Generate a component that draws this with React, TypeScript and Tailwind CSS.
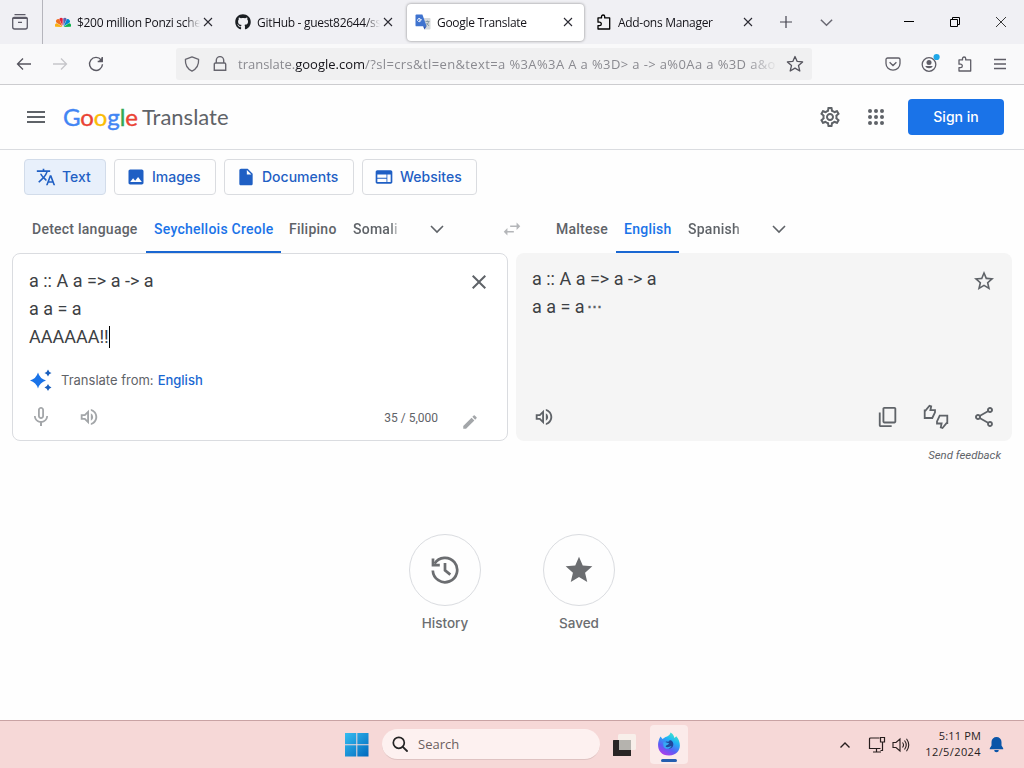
import type { ReactNode } from "react";
import {
  MdTranslate,
  MdImage,
  MdInsertDriveFile,
  MdWeb,
  MdOutlineSettings,
  MdMenu,
  MdClose,
  MdMicNone,
  MdOutlineVolumeUp,
  MdEdit,
  MdStarOutline,
  MdContentCopy,
  MdOutlineShare,
  MdStar,
} from "react-icons/md";
import { FaGithub } from "react-icons/fa";

function CloseIcon() {
  return (
    <svg className="block size-[16px] shrink-0" fill="none" viewBox="0 0 16 16">
      <path d="M4 4L12 12M12 4L4 12" stroke="#2b2a33" strokeWidth="1.1" />
    </svg>
  );
}

function Chevron({ className }: { className: string }) {
  return (
    <svg className={className} fill="none" viewBox="0 0 16 16">
      <path d="M2 5L8 11L14 5" stroke="currentColor" strokeWidth="1.6" />
    </svg>
  );
}

function PuzzleIcon() {
  return (
    <svg className="block size-[16px] shrink-0" fill="none" viewBox="0 0 16 16">
      <path
        d="M2 6.5V3.9H5.5V2.6A1.6 1.6 0 0 1 8.7 2.6V3.9H13.7V15H2V11.6H3.6A1.7 1.7 0 0 0 3.6 8.2H2V6.5"
        stroke="currentColor"
        strokeLinejoin="round"
        strokeWidth="1.3"
      />
    </svg>
  );
}

function NbcIcon() {
  return (
    <svg className="block size-[16px] shrink-0" viewBox="0 0 16 16">
      <path d="M7.5 13L0.4 12.8A2.2 2.2 0 0 1 2 9.2Z" fill="#fbb211" />
      <path d="M7.3 12.2L1.3 8.6A2.3 2.3 0 0 1 4.3 5.3Z" fill="#ef7021" />
      <path d="M7.5 11.7L4.3 5A2.4 2.4 0 0 1 7.8 4.5Z" fill="#e5203b" />
      <path d="M8.5 11.7L8.2 4.5A2.4 2.4 0 0 1 11.7 5Z" fill="#6460aa" />
      <path d="M8.7 12.2L11.8 5.3A2.3 2.3 0 0 1 14.7 8.6Z" fill="#0089d0" />
      <path d="M8.5 13L14 9.2A2.2 2.2 0 0 1 15.6 12.8Z" fill="#0db14b" />
    </svg>
  );
}

function TranslateLogo() {
  return (
    <svg className="block size-[16px] shrink-0" viewBox="0 0 16 16">
      <path d="M7 4H14.5A1 1 0 0 1 15.5 5V14.5A1 1 0 0 1 14.5 15.5H9.5Z" fill="#d6d9dc" />
      <path d="M1.4 0.5H7.4L11.6 12.3H1.4A1 1 0 0 1 0.5 11.4V1.4A1 1 0 0 1 1.4 0.5Z" fill="#3f73cf" />
      <path d="M8 12.3H11.6L9.5 15.5Z" fill="#2a56b5" />
      <path d="M6.8 5.7H4.7V6.7H5.7A1.6 1.6 0 1 1 5.3 4.9" fill="none" stroke="#fff" strokeWidth="0.9" />
      <path d="M10.5 7.5H14.5M12.4 6.5V7.5M13.7 7.5C13.2 9.5 12 10.8 11.2 11.5M11.5 9L14 12" fill="none" stroke="#78909c" strokeWidth="0.8" />
    </svg>
  );
}

function Tab({ icon, title, active }: { icon: ReactNode; title: string; active?: boolean }) {
  return (
    <div
      className={
        active
          ? "flex h-[37px] w-[177px] items-center rounded-[4px] bg-white pr-[8px] pl-[8px] shadow-[0_0_3px_rgba(0,0,0,0.45)]"
          : "flex h-[37px] w-[177px] items-center pr-[8px] pl-[8px]"
      }
    >
      {icon}
      <div className="ml-[6px] flex-1 overflow-hidden mask-r-from-88% pt-[2px] font-['Open_Sans',sans-serif] text-[12px] tracking-[-0.3px] whitespace-nowrap text-[#15141a]">
        {title}
      </div>
      <CloseIcon />
    </div>
  );
}

function TabStrip() {
  return (
    <div className="flex h-[44px] shrink-0 items-center bg-[#f0f0f4]">
      <div className="flex h-full w-[43px] items-center justify-center border-r border-[#b5b5bc] pr-[3px]">
        <svg className="block size-[18px]" fill="none" viewBox="0 0 18 18">
          <path d="M3.5 1.7H14.5M1.7 5.4H16.3V14A2 2 0 0 1 14.3 16H3.7A2 2 0 0 1 1.7 14V5.4ZM1.7 5.4A1.5 1.5 0 0 1 3 4.4H15A1.5 1.5 0 0 1 16.3 5.4M7 9.3H11" stroke="#5b5a66" strokeWidth="1.3" />
        </svg>
      </div>
      <div className="ml-[4px] flex gap-[3px]">
        <Tab icon={<NbcIcon />} title="$200 million Ponzi sche" />
        <Tab icon={<FaGithub className="size-[16px] shrink-0 text-[#1b1f23]" />} title="GitHub - guest82644/ss" />
        <Tab icon={<TranslateLogo />} title="Google Translate" active />
        <Tab icon={<span className="pl-[1px]"><PuzzleIcon /></span>} title="Add-ons Manager" />
      </div>
      <svg className="ml-[14px] block size-[16px]" viewBox="0 0 16 16">
        <path d="M8 2V14M2 8H14" stroke="#45444f" strokeWidth="1.2" />
      </svg>
      <Chevron className="ml-[25px] block size-[15px] text-[#6a6973]" />
      <div className="ml-auto flex items-center gap-[34px] pr-[17px]">
        <svg className="block size-[12px]" viewBox="0 0 12 12">
          <path d="M1 5.5H11" stroke="#000" strokeWidth="1" />
        </svg>
        <svg className="block size-[12px]" fill="none" viewBox="0 0 12 12">
          <path d="M1.5 3.5H8.5V10.5H1.5ZM3.5 3.5V1.5H10.5V8.5H8.5" stroke="#000" />
        </svg>
        <svg className="block size-[12px]" viewBox="0 0 12 12">
          <path d="M1 1L11 11M11 1L1 11" stroke="#222" strokeWidth="0.9" />
        </svg>
      </div>
    </div>
  );
}

function AddressBar() {
  return (
    <div className="flex h-[32px] w-[636px] items-center rounded-[3px] bg-[#f0f0f1] px-[8px]">
      <svg className="block size-[16px] shrink-0" fill="none" viewBox="0 0 16 16">
        <path d="M8 0.9L14.6 3.3C14.9 8.5 12.5 13 8 15.1C3.5 13 1.1 8.5 1.4 3.3Z" stroke="#66656e" strokeLinejoin="round" strokeWidth="1.3" />
      </svg>
      <svg className="ml-[12px] block size-[16px] shrink-0" fill="none" viewBox="0 0 16 16">
        <path d="M4.3 7V4.3A3.7 3.7 0 0 1 11.7 4.3V7M3.5 7H12.5A1.2 1.2 0 0 1 13.7 8.2V14.2H2.3V8.2A1.2 1.2 0 0 1 3.5 7Z" stroke="#66656e" strokeWidth="1.4" />
      </svg>
      <div className="ml-[10px] w-[541px] overflow-hidden mask-r-from-94% pt-[2px] font-['Open_Sans',sans-serif] text-[13px] whitespace-nowrap text-[#8a8a90]">
        translate.<span className="text-[#15141a]">google.com</span>
        <span className="tracking-[0.38px]">/?sl=crs&amp;tl=en&amp;text=a %3A%3A A a %3D&gt; a -&gt; a%0Aa a %3D a&amp;o</span>
      </div>
      <svg className="ml-auto block size-[18px] shrink-0" fill="none" viewBox="0 0 18 18">
        <path d="M9 1.5L11.2 6.4L16.6 6.9L12.5 10.6L13.8 16L9 13.1L4.2 16L5.5 10.6L1.4 6.9L6.8 6.4Z" stroke="#55545d" strokeLinejoin="round" strokeWidth="1.3" />
      </svg>
    </div>
  );
}

function NavBar() {
  return (
    <div className="flex h-[41px] shrink-0 items-center border-b border-[#cccccf] bg-[#f9f9fa]">
      <svg className="ml-[16px] block size-[16px]" fill="none" viewBox="0 0 16 16">
        <path d="M15 8H1.5M7 2.5L1.5 8L7 13.5" stroke="#55545d" strokeWidth="1.3" />
      </svg>
      <svg className="ml-[20px] block size-[16px]" fill="none" viewBox="0 0 16 16">
        <path d="M1 8H14.5M9 2.5L14.5 8L9 13.5" stroke="#c6c6ca" strokeWidth="1.3" />
      </svg>
      <svg className="mr-[72px] ml-[20px] block size-[16px]" fill="none" viewBox="0 0 16 16">
        <path d="M13.2 4A6.5 6.5 0 1 0 14.5 8.3M14.2 1V5.5H9.7" stroke="#5b5a63" strokeWidth="1.4" />
        <path d="M14.8 1V6H9.8Z" fill="#5b5a63" />
      </svg>
      <AddressBar />
      <div className="ml-auto flex items-center gap-[20px] pr-[16px] text-[#5f5e67]">
        <svg className="block size-[16px]" fill="none" viewBox="0 0 16 16">
          <path d="M2.6 2H13.4A1.6 1.6 0 0 1 15 3.6V7.5A7 6.6 0 0 1 1 7.5V3.6A1.6 1.6 0 0 1 2.6 2ZM4.6 6.3L8 9.5L11.4 6.3" stroke="currentColor" strokeWidth="1.3" />
        </svg>
        <svg className="block size-[16px] overflow-visible" fill="none" viewBox="0 0 16 16">
          <circle cx="8" cy="8.5" r="6.8" stroke="currentColor" strokeWidth="1.3" />
          <circle cx="8" cy="6.6" fill="currentColor" r="2.5" />
          <path d="M4.2 10H11.8A4 3.4 0 0 1 4.2 10Z" fill="currentColor" />
          <circle cx="15.6" cy="1" fill="#1ea7e8" r="3.1" />
        </svg>
        <PuzzleIcon />
        <svg className="ml-[-1px] block size-[16px]" viewBox="0 0 16 16">
          <path d="M2 3.5H14M2 8H14M2 12.5H14" stroke="currentColor" strokeWidth="1.3" />
        </svg>
      </div>
    </div>
  );
}

function AppHeader() {
  return (
    <div className="flex h-[65px] shrink-0 items-center border-b border-[#dadce0] pr-[20px] pl-[24px]">
      <MdMenu className="size-[24px] text-[#5f6368]" />
      <div className="ml-[15px] flex items-center font-['Lato',sans-serif] text-[22px] leading-[28px]">
        <div className="w-[79px] text-[24px] tracking-[-0.1px] [-webkit-text-stroke:0.4px_currentColor]">
          <span className="text-[#4285f4]">G</span>
          <span className="text-[#ea4335]">o</span>
          <span className="text-[#fbbc05]">o</span>
          <span className="text-[#4285f4]">g</span>
          <span className="text-[#34a853]">l</span>
          <span className="text-[#ea4335]">e</span>
        </div>
        <div className="text-[#5f6368]">Translate</div>
      </div>
      <MdOutlineSettings className="ml-auto size-[24px] text-[#5f6368]" />
      <svg className="ml-[22px] block size-[24px]" fill="#5f6368" viewBox="0 0 24 24">
        <circle cx="6" cy="6" r="2" />
        <circle cx="12" cy="6" r="2" />
        <circle cx="18" cy="6" r="2" />
        <circle cx="6" cy="12" r="2" />
        <circle cx="12" cy="12" r="2" />
        <circle cx="18" cy="12" r="2" />
        <circle cx="6" cy="18" r="2" />
        <circle cx="12" cy="18" r="2" />
        <circle cx="18" cy="18" r="2" />
      </svg>
      <button className="ml-[20px] h-[36px] w-[96px] rounded-[4px] bg-[#1a73e8] pb-[1px] font-['Inter',sans-serif] text-[14px] font-medium text-white">
        Sign in
      </button>
    </div>
  );
}

function ModeButtons() {
  return (
    <div className="flex gap-[8px] px-[24px] pt-[9px] font-['Inter',sans-serif] text-[14px] font-medium text-[#1f5fc4]">
      <button className="flex h-[36px] w-[82px] items-center gap-[6px] rounded-[4px] border border-[#d2dcea] bg-[#e8f0fb] pl-[11px]">
        <MdTranslate className="size-[20px]" />
        <span className="pb-[1px]">Text</span>
      </button>
      <button className="flex h-[36px] w-[102px] items-center gap-[6px] rounded-[4px] border border-[#dadce0] pl-[11px]">
        <MdImage className="size-[20px]" />
        <span className="pb-[1px]">Images</span>
      </button>
      <button className="flex h-[36px] w-[130px] items-center gap-[6px] rounded-[4px] border border-[#dadce0] pl-[11px]">
        <MdInsertDriveFile className="size-[20px]" />
        <span className="pb-[1px]">Documents</span>
      </button>
      <button className="flex h-[36px] w-[115px] items-center gap-[6px] rounded-[4px] border border-[#dadce0] pl-[11px]">
        <MdWeb className="size-[20px]" />
        <span className="pb-[1px]">Websites</span>
      </button>
    </div>
  );
}

function Language({ name, className }: { name: string; className: string }) {
  return <div className={`flex h-[48px] items-center px-[8px] whitespace-nowrap ${className}`}>{name}</div>;
}

function LanguageRow() {
  return (
    <div className="mt-[10px] flex h-[48px] items-center pl-[24px] font-['Roboto',sans-serif] text-[14px] font-medium tracking-[0.25px] text-[#5f6368]">
      <Language name="Detect language" className="w-[122px]" />
      <Language name="Seychellois Creole" className="w-[135px] border-b-2 border-[#1967d2] pt-[2px] text-[#1a73e8]" />
      <Language name="Filipino" className="w-[64px]" />
      <Language name="Somali" className="w-[56px] mask-r-from-80%" />
      <Chevron className="ml-[28px] block size-[16px]" />
      <svg className="ml-[56px] block size-[22px]" fill="#b4b6b9" viewBox="0 0 24 24">
        <path d="M7 11L3 15L7 19V15.8H14V14.2H7V11ZM21 9L17 5V8.2H10V9.8H17V13L21 9Z" />
      </svg>
      <Language name="Maltese" className="ml-[25px] w-[68px]" />
      <Language name="English" className="w-[63px] border-b-2 border-[#1967d2] pt-[2px] text-[#1a73e8]" />
      <Language name="Spanish" className="w-[69px] pl-[9px] mask-r-from-80%" />
      <Chevron className="ml-[23px] block size-[16px]" />
    </div>
  );
}

function SourcePanel() {
  return (
    <div className="flex h-[188px] w-[496px] flex-col rounded-[8px] border border-[#dadce0] bg-white">
      <div className="flex justify-between pt-[13px] pr-[16px] pl-[16px]">
        <div className="text-[18px] leading-[28px] text-[#3c4043]">
          <p>a :: A a =&gt; a -&gt; a</p>
          <p>a a = a</p>
          <p className="flex items-center">
            AAAAAA!!
            <span className="h-[22px] w-px bg-black" />
          </p>
        </div>
        <MdClose className="mt-[3px] size-[24px] text-[#5f6368]" />
      </div>
      <div className="mt-[17px] flex items-center pl-[16px] font-['Inter',sans-serif] text-[13px] leading-[24px] text-[#5f6368]">
        <svg className="mr-[8px] block size-[24px]" viewBox="0 0 24 24">
          <path d="M9 4.5Q10.8 10.7 17 12.5Q10.8 14.3 9 20.5Q7.2 14.3 1 12.5Q7.2 10.7 9 4.5Z" fill="#1a73e8" />
          <path d="M19 1.5Q19.8 4.2 22.5 5Q19.8 5.8 19 8.5Q18.2 5.8 15.5 5Q18.2 4.2 19 1.5Z" fill="#1a5fbd" />
          <path d="M19 16Q19.8 18.7 22.5 19.5Q19.8 20.3 19 23Q18.2 20.3 15.5 19.5Q18.2 18.7 19 16Z" fill="#1a5fbd" />
        </svg>
        <span>Translate from:</span>
        <span className="ml-[4px] font-medium text-[#1967d2]">English</span>
      </div>
      <div className="mt-[11px] flex items-center pl-[16px] text-[#a3a6a9]">
        <MdMicNone className="size-[24px]" />
        <MdOutlineVolumeUp className="ml-[25px] size-[22px]" />
        <div className="mt-[2px] ml-auto text-[12px] text-[#5f6368]">35 / 5,000</div>
        <MdEdit className="mt-[10px] mr-[28px] ml-[23px] size-[18px]" />
      </div>
    </div>
  );
}

function RateIcon() {
  return (
    <svg className="block size-[26px]" fill="none" viewBox="0 0 26 26">
      <path d="M1.7 6.5V14H9.3L12 8.3V6.2H7.4L8.2 2.3L6.5 1.7L2.5 6.5ZM24.3 19.2V11.7H16.7L14 17.4V19.5H18.6L17.8 23.4L19.5 24L23.5 19.2Z" stroke="#5f6368" strokeWidth="1.8" />
    </svg>
  );
}

function TargetPanel() {
  return (
    <div className="flex h-[188px] w-[496px] flex-col justify-between rounded-[8px] bg-[#f5f5f5] pt-[12px] pr-[16px] pb-[11px] pl-[16px] text-[#5f6368]">
      <div className="flex justify-between">
        <div className="text-[18px] leading-[28px] text-[#3c4043]">
          <p>a :: A a =&gt; a -&gt; a</p>
          <p className="flex">
            a a = a<span className="ml-[2px] text-[15px] leading-[27px] font-bold text-[#5f6368]">⋯</span>
          </p>
        </div>
        <MdStarOutline className="mt-[4px] size-[24px]" />
      </div>
      <div className="flex items-center">
        <MdOutlineVolumeUp className="ml-[1px] size-[22px]" />
        <MdContentCopy className="ml-auto size-[22px] -scale-x-100 rotate-180" />
        <span className="mr-[23px] ml-[24px]">
          <RateIcon />
        </span>
        <MdOutlineShare className="size-[24px]" />
      </div>
    </div>
  );
}

function HistoryIcon() {
  return (
    <svg className="block size-[30px]" fill="none" viewBox="0 0 30 30">
      <path d="M2.8 15.5A12.2 12.2 0 1 0 4.6 8.6" stroke="currentColor" strokeWidth="2.7" />
      <path d="M3 3.5V10.2H9.8M15 8V15.3L20.3 19.6" stroke="currentColor" strokeWidth="2.7" />
    </svg>
  );
}

function Shortcut({ icon, label }: { icon: ReactNode; label: string }) {
  return (
    <div className="flex w-[72px] flex-col items-center">
      <div className="flex size-[72px] items-center justify-center rounded-full border border-[#dadce0] text-[#6b6d70]">{icon}</div>
      <div className="mt-[7px] font-['Inter',sans-serif] text-[13.5px] leading-[20px] font-medium text-[#6b6d70]">{label}</div>
    </div>
  );
}

function FirefoxIcon() {
  return (
    <svg className="block size-[24px]" viewBox="0 0 24 24">
      <defs>
        <linearGradient id="flame" x1="0.8" x2="0.3" y1="0" y2="1">
          <stop offset="0" stopColor="#45f0c2" />
          <stop offset="0.35" stopColor="#20b5f5" />
          <stop offset="0.7" stopColor="#5a5df5" />
          <stop offset="1" stopColor="#b03bea" />
        </linearGradient>
      </defs>
      <path d="M13.5 0.5C16.5 2.3 17 4.2 17.4 6L19.3 4.2C25.3 10.5 24.3 23.5 12 23.5C0.5 23.5-1.2 12.3 3.5 4.5L5.5 7L8.5 5C10.5 4.5 13.2 3.2 13.5 0.5Z" fill="url(#flame)" />
      <path d="M9 9.5L11.5 9.8C12.5 8 14 8 15 9C18 12.5 15.5 16.7 12 16.7C9 16.7 7.5 14 8 12Z" fill="#1f479c" />
      <path d="M6.2 10.5C8 10 10 11 12.2 11.2C11.5 13 9 12.7 8.5 14.5C10 16 13 14.4 14.5 14C13.2 17.3 8.5 18 6.5 14.5Z" fill="#36a9f3" />
    </svg>
  );
}

function Taskbar() {
  return (
    <div className="flex h-[48px] shrink-0 items-center border-t border-[#c9a3a4] bg-[#f6d8d7] font-['Open_Sans',sans-serif]">
      <svg className="ml-[345px] block size-[24px]" viewBox="0 0 24 24">
        <defs>
          <linearGradient id="pane" x1="0" x2="1" y1="0" y2="1">
            <stop offset="0" stopColor="#35bdf1" />
            <stop offset="1" stopColor="#0068bd" />
          </linearGradient>
        </defs>
        <path d="M0 0H11.3V11.3H0ZM12.3 0H23.5V11.3H12.3ZM0 12.3H11.3V23.5H0ZM12.3 12.3H23.5V23.5H12.3Z" fill="url(#pane)" />
      </svg>
      <div className="ml-[13px] flex h-[31px] w-[218px] items-center rounded-full border-b border-[#dfc3c2] bg-[#fdf1f0] pl-[10px]">
        <svg className="block size-[16px]" fill="none" viewBox="0 0 16 16">
          <circle cx="6.8" cy="6.8" r="5.5" stroke="#242424" strokeWidth="1.7" />
          <path d="M10.8 10.8L15 15" stroke="#242424" strokeLinecap="round" strokeWidth="1.8" />
        </svg>
        <span className="ml-[10px] pt-[1px] text-[13px] text-[#6b5f5f]">Search</span>
      </div>
      <svg className="ml-[12px] block h-[24px] w-[24px]" viewBox="0 0 24 24">
        <rect fill="#f8efea" height="16" rx="1.5" width="18" x="6" y="1" />
        <rect fill="#292525" height="16" rx="0.5" width="18" x="1" y="7" />
        <rect fill="#b5b3ae" height="10" width="12" x="7" y="7" />
      </svg>
      <div className="ml-[14px] flex h-[39px] w-[38px] flex-col items-center rounded-[4px] bg-[#fbebea] pt-[7px]">
        <FirefoxIcon />
        <span className="mt-[3px] h-[3px] w-[16px] shrink-0 rounded-full bg-[#245eb0]" />
      </div>
      <div className="ml-auto flex items-center text-[#271d1d]">
        <svg className="block size-[10px]" fill="none" viewBox="0 0 10 10">
          <path d="M0.5 7.5L5 3L9.5 7.5" stroke="currentColor" strokeWidth="1.4" />
        </svg>
        <svg className="ml-[18px] block h-[18px] w-[18px]" fill="none" viewBox="0 0 18 18">
          <path d="M11.5 2H2.5A1 1 0 0 0 1.5 3V12.5H12.5M5 16H13M8.5 12.5V16M12.5 1.5H16.5V6H12.5ZM14.5 6V14.5H12.5" stroke="currentColor" strokeWidth="1.2" />
        </svg>
        <svg className="ml-[6px] block h-[16px] w-[18px]" fill="none" viewBox="0 0 18 16">
          <path d="M1 5.5H4L8 2V14L4 10.5H1ZM10.5 5.5Q12.5 8 10.5 10.5M12.5 3.5Q16 8 12.5 12.5M14.5 1.7Q19 8 14.5 14.3" stroke="currentColor" strokeWidth="1.1" />
        </svg>
        <div className="mb-[2px] ml-[11px] w-[60px] text-right text-[11px] leading-[16px] whitespace-nowrap">
          <p className="tracking-[0.15px]">5:11 PM</p>
          <p className="tracking-[0.4px]">12/5/2024</p>
        </div>
        <svg className="mr-[20px] ml-[8px] block h-[17px] w-[15px]" fill="#0a55a8" viewBox="0 0 15 17">
          <path d="M7.5 1A5 5 0 0 1 12.5 6V9.5L14.2 12.2V13.2H0.8V12.2L2.5 9.5V6A5 5 0 0 1 7.5 1ZM5.2 14H9.8A2.3 2.3 0 0 1 5.2 14Z" />
        </svg>
      </div>
    </div>
  );
}

export default function App() {
  return (
    <div className="flex h-[768px] w-[1024px] flex-col overflow-hidden bg-[#fefefe] font-['Roboto',sans-serif]">
      <TabStrip />
      <NavBar />
      <AppHeader />
      <main className="flex flex-1 flex-col">
        <ModeButtons />
        <LanguageRow />
        <div className="flex gap-[8px] pl-[12px]">
          <SourcePanel />
          <TargetPanel />
        </div>
        <div className="mt-[6px] pr-[23px] text-right text-[11.4px] leading-[16px] text-[#5f6368] italic">Send feedback</div>
        <div className="mt-[71px] flex justify-center gap-[62px]">
          <Shortcut icon={<HistoryIcon />} label="History" />
          <Shortcut icon={<MdStar className="size-[32px]" />} label="Saved" />
        </div>
      </main>
      <Taskbar />
    </div>
  );
}
